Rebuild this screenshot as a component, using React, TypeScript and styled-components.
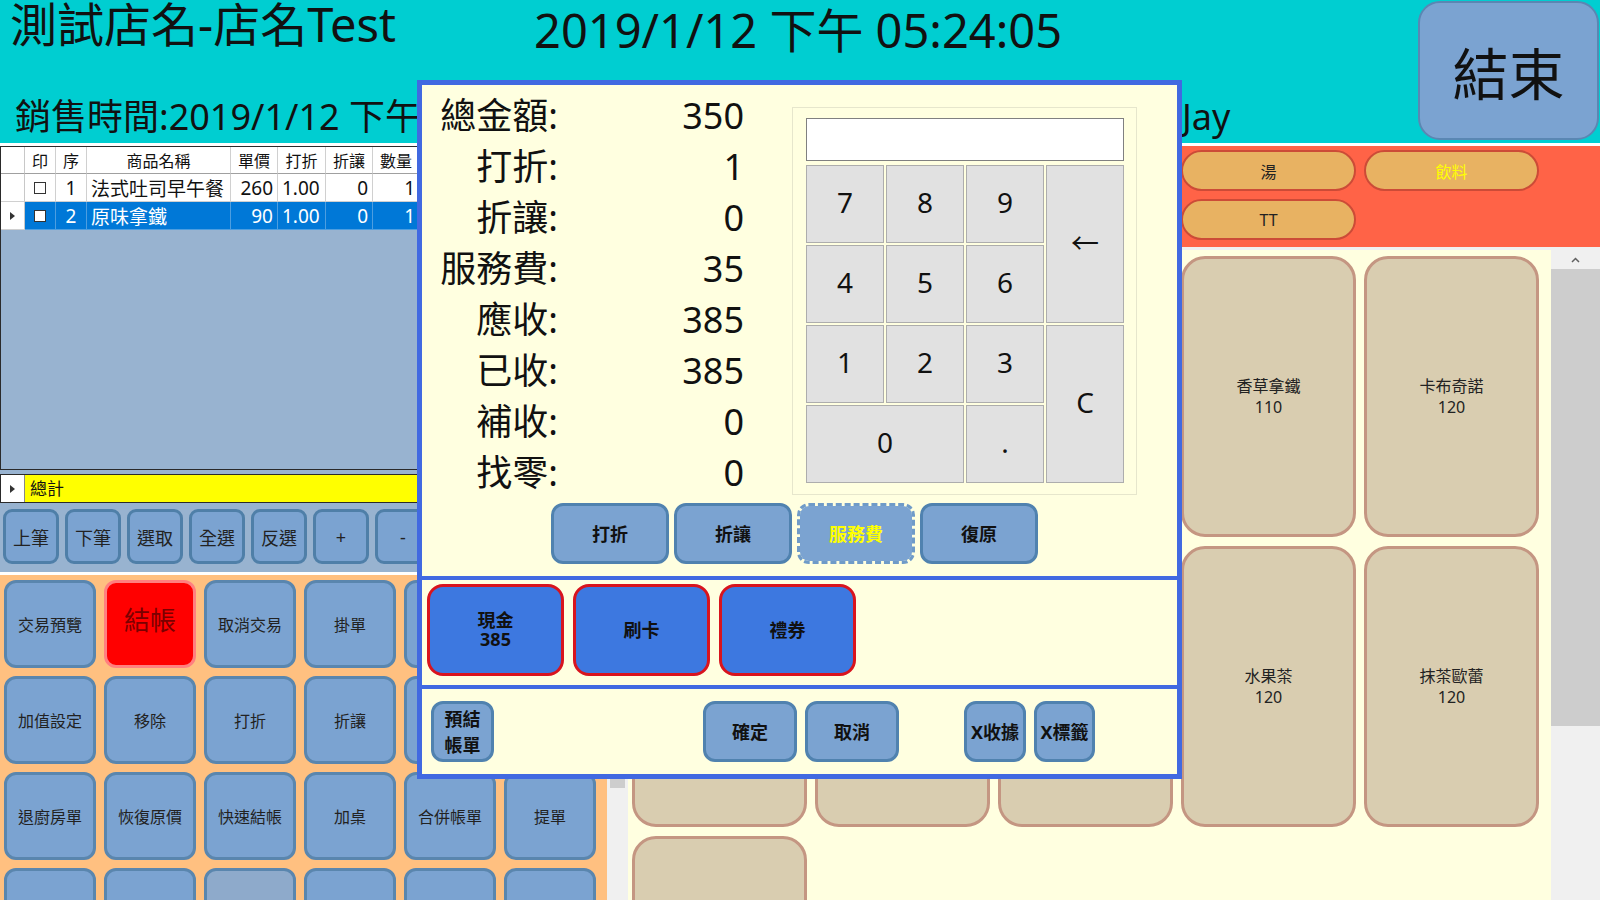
import React from "react";
import styled, { createGlobalStyle } from "styled-components";

const FONT = `"Noto Sans", "Noto Sans CJK TC", sans-serif`;

const GlobalStyle = createGlobalStyle`
  html, body { margin: 0; padding: 0; }
  body { font-family: ${FONT}; background: #ffffff; overflow: hidden; }
  *, *::before, *::after { box-sizing: border-box; }
  button { font-family: ${FONT}; }
`;

const Page = styled.div`
  position: relative;
  width: 1600px;
  height: 900px;
  overflow: hidden;
  background: #ffffff;
  font-family: ${FONT};
  color: #111;
`;

/* ---------------- Header ---------------- */
const Header = styled.header`
  display: grid;
  grid-template-columns: 1fr 182px;
  height: 146px;
  background: #00ced1;
  border-bottom: 3px solid #ffffff;
`;
const HeaderMain = styled.div`
  display: flex;
  flex-direction: column;
`;
const TopRow = styled.div`
  display: flex;
  height: 60px;
`;
const ShopName = styled.div`
  width: 534px;
  padding-left: 10px;
  font-size: 47px;
  line-height: 52px;
  margin-top: -2px;
  white-space: nowrap;
`;
const Clock = styled.div`
  padding-top: 3px;
  font-size: 47px;
  line-height: 54px;
  white-space: nowrap;
`;
const BottomRow = styled.div`
  display: grid;
  grid-template-columns: 1182px 1fr;
  margin-top: 35px;
  height: 44px;
  font-size: 36px;
  line-height: 44px;
  white-space: nowrap;
`;
const SaleTime = styled.div`
  padding-left: 15px;
`;
const Cashier = styled.div``;
const CloseCell = styled.div`
  padding: 1px 1px 3px 0;
`;
const CloseButton = styled.button`
  width: 100%;
  height: 100%;
  background: #7ba3d1;
  border: 2px solid #5a87b3;
  border-radius: 22px;
  font-size: 56px;
  color: #111;
  padding: 0;
`;

/* ---------------- Body ---------------- */
const Body = styled.div`
  display: grid;
  grid-template-columns: 628px 1fr;
  height: 754px;
`;
const LeftPanel = styled.div`
  display: flex;
  flex-direction: column;
  background: #98b3d0;
  min-height: 0;
`;

const gridCols = [
  { title: "印", width: 31, align: "center" },
  { title: "序", width: 31, align: "center" },
  { title: "商品名稱", width: 144, align: "left" },
  { title: "單價", width: 47, align: "right" },
  { title: "打折", width: 48, align: "left" },
  { title: "折讓", width: 47, align: "right" },
  { title: "數量", width: 47, align: "right" },
  { title: "小計", width: 60, align: "right" },
  { title: "備註", width: 120, align: "left" },
] as const;

const TEMPLATE = `24px ${gridCols.map((c) => `${c.width}px`).join(" ")}`;

const OrderGrid = styled.div`
  height: 324px;
  border: 1px solid #2a2a2a;
  border-right: none;
  background: #98b3d0;
  overflow: hidden;
`;
const GridRow = styled.div<{ $header?: boolean }>`
  display: grid;
  grid-template-columns: ${TEMPLATE};
  height: ${(p) => (p.$header ? 27 : 28)}px;
`;
const RowHead = styled.div<{ $header?: boolean }>`
  display: flex;
  align-items: center;
  justify-content: center;
  background: #ffffff;
  border-right: 1px solid #c8c8c8;
  border-bottom: 1px solid ${(p) => (p.$header ? "#a0a0a0" : "#d0d0d0")};
`;
const Cell = styled.div<{ $align: string; $selected?: boolean; $header?: boolean }>`
  display: flex;
  align-items: center;
  justify-content: ${(p) =>
    p.$align === "left" ? "flex-start" : p.$align === "right" ? "flex-end" : "center"};
  padding: 0 4px 0 4px;
  overflow: hidden;
  white-space: nowrap;
  font-size: ${(p) => (p.$header ? 16 : 19)}px;
  background: ${(p) => (p.$selected ? "#0078d7" : "#ffffff")};
  color: ${(p) => (p.$selected ? "#ffffff" : "#111")};
  border-right: 1px solid ${(p) => (p.$selected ? "#4d9ee0" : "#d0d0d0")};
  border-bottom: 1px solid ${(p) => (p.$header ? "#a0a0a0" : p.$selected ? "#4d9ee0" : "#d0d0d0")};
`;
const HeaderCell = styled(Cell)`
  justify-content: center;
`;
const CheckBox = styled.span`
  width: 12px;
  height: 12px;
  border: 1px solid #333;
  background: #ffffff;
`;
const RowArrow = styled.span`
  width: 0;
  height: 0;
  border-left: 5px solid #333;
  border-top: 4px solid transparent;
  border-bottom: 4px solid transparent;
`;

const GridGap = styled.div`
  height: 4px;
`;
const TotalGrid = styled.div`
  display: grid;
  grid-template-columns: 24px 1fr;
  height: 29px;
  border-top: 1px solid #2a2a2a;
  border-bottom: 1px solid #2a2a2a;
  border-left: 1px solid #2a2a2a;
`;
const TotalHead = styled.div`
  display: flex;
  align-items: center;
  justify-content: center;
  background: #ffffff;
  border-right: 1px solid #888;
`;
const TotalCell = styled.div`
  background: #ffff00;
  font-size: 17px;
  line-height: 27px;
  padding-left: 5px;
`;

const ActionBar = styled.div`
  display: flex;
  gap: 6px;
  height: 69px;
  padding: 6px 0 0 3px;
  overflow: hidden;
`;
const ActionButton = styled.button`
  flex: 0 0 56px;
  height: 55px;
  background: #7ba3d1;
  border: 3px solid #4f7fa8;
  border-radius: 9px;
  font-size: 18px;
  color: #222;
  padding: 0;
`;

const FunctionArea = styled.div`
  flex: 1;
  display: grid;
  grid-template-columns: 607px 21px;
  border-top: 3px solid #ffffff;
  background: #ffc080;
  min-height: 0;
`;
const FuncGrid = styled.div`
  display: grid;
  grid-template-columns: repeat(6, 92px);
  grid-auto-rows: 88px;
  column-gap: 8px;
  row-gap: 8px;
  padding: 5px 0 0 4px;
  overflow: hidden;
`;
const FuncButton = styled.button<{ $variant?: "pay" | "dim" }>`
  background: ${(p) => (p.$variant === "pay" ? "#ff0000" : p.$variant === "dim" ? "#8eaacb" : "#7ba3d1")};
  border: 3px solid ${(p) => (p.$variant === "pay" ? "#ff8080" : "#5a86ae")};
  border-radius: 12px;
  font-size: ${(p) => (p.$variant === "pay" ? 26 : 16)}px;
  color: ${(p) => (p.$variant === "pay" ? "#7a0000" : "#222")};
  padding: 0;
  ${(p) => (p.$variant === "pay" ? "padding-bottom: 10px;" : "")}
`;

/* scrollbars */
const ScrollTrack = styled.div`
  display: flex;
  flex-direction: column;
  align-items: center;
  background: #f0f0f0;
  height: 100%;
  overflow: hidden;
`;
const ScrollArrow = styled.div<{ $h: number }>`
  flex: 0 0 ${(p) => p.$h}px;
  width: 100%;
  display: flex;
  align-items: center;
  justify-content: center;
`;
const ScrollThumb = styled.div<{ $h: number; $w: string }>`
  flex: 0 0 ${(p) => p.$h}px;
  width: ${(p) => p.$w};
  background: #cdcdcd;
`;
const ScrollSpacer = styled.div`
  flex: 1;
`;
const Chevron = ({ up }: { up?: boolean }) => (
  <svg width="9" height="6" viewBox="0 0 9 6">
    <polyline
      points={up ? "1,5 4.5,1.5 8,5" : "1,1 4.5,4.5 8,1"}
      fill="none"
      stroke="#606060"
      strokeWidth="1.5"
    />
  </svg>
);

/* right panel */
const RightPanel = styled.div`
  display: flex;
  flex-direction: column;
  min-width: 0;
`;
const CategoryBand = styled.div`
  height: 104px;
  flex-shrink: 0;
  background: #ff6347;
  border-bottom: 3px solid #f0f0f0;
  display: grid;
  grid-template-columns: repeat(5, 175px);
  grid-auto-rows: 41px;
  column-gap: 8px;
  row-gap: 8px;
  padding: 4px 0 0 4px;
`;
const CategoryPill = styled.button<{ $active?: boolean }>`
  background: #e8b262;
  border: 2px solid #cc4b37;
  border-radius: 21px;
  font-size: 16px;
  color: ${(p) => (p.$active ? "#ffff00" : "#222")};
  padding: 0;
`;
const ProductArea = styled.div`
  flex: 1;
  display: grid;
  grid-template-columns: 1fr 49px;
  min-height: 0;
`;
const ProductGrid = styled.div`
  background: #ffffe0;
  display: grid;
  grid-template-columns: repeat(5, 175px);
  grid-auto-rows: 281px;
  column-gap: 8px;
  row-gap: 9px;
  padding: 6px 0 0 4px;
  overflow: hidden;
`;
const ProductTile = styled.button`
  background: #d9cdb0;
  border: 3px solid #c49682;
  border-radius: 24px;
  font-size: 16px;
  line-height: 21px;
  color: #222;
  padding: 0;
  white-space: pre-line;
`;

/* ---------------- Dialog ---------------- */
const Dialog = styled.div`
  position: absolute;
  left: 417px;
  top: 80px;
  width: 765px;
  height: 699px;
  border: 5px solid #4169e1;
  background: #ffffe0;
  display: flex;
  flex-direction: column;
  z-index: 10;
`;
const MainSection = styled.div`
  height: 491px;
  display: flex;
  flex-direction: column;
`;
const UpperArea = styled.div`
  display: flex;
  align-items: flex-start;
  height: 418px;
`;
const Summary = styled.div`
  display: grid;
  grid-template-columns: 136px 186px;
  grid-auto-rows: 51px;
  padding-top: 5px;
  font-size: 36px;
  line-height: 51px;
  white-space: nowrap;
`;
const SumLabel = styled.div`
  text-align: right;
`;
const SumValue = styled.div`
  text-align: right;
`;
const Numpad = styled.div`
  margin: 22px 0 0 48px;
  width: 345px;
  height: 388px;
  border: 1px solid #e6e6cc;
  padding: 10px 12px 0 13px;
`;
const NumInput = styled.div`
  width: 318px;
  height: 43px;
  background: #ffffff;
  border: 1px solid #808080;
`;
const KeyGrid = styled.div`
  display: grid;
  grid-template-columns: repeat(4, 78px);
  grid-template-rows: repeat(4, 78px);
  gap: 2px;
  margin-top: 4px;
`;
const Key = styled.button<{ $col?: string; $row?: string }>`
  grid-column: ${(p) => p.$col || "auto"};
  grid-row: ${(p) => p.$row || "auto"};
  background: #e1e1e1;
  border: 1px solid #adadad;
  font-size: 28px;
  color: #111;
  padding: 0 0 4px 0;
`;
const DialogButtonRow = styled.div`
  display: flex;
  gap: 5px;
  padding-left: 129px;
`;
const DlgButton = styled.button<{ $w: number; $gap?: number; $focused?: boolean }>`
  flex: 0 0 ${(p) => p.$w}px;
  height: 61px;
  margin-left: ${(p) => p.$gap || 0}px;
  background: #7ba3d1;
  border: 3px ${(p) => (p.$focused ? "dashed #6f9bc8" : "solid #5082af")};
  background-clip: ${(p) => (p.$focused ? "padding-box" : "border-box")};
  border-radius: 12px;
  font-size: 18px;
  font-weight: 700;
  line-height: 26px;
  color: ${(p) => (p.$focused ? "#ffff00" : "#111")};
  padding: 0;
  white-space: pre-line;
`;
const PaySection = styled.div`
  height: 109px;
  border-top: 4px solid #4169e1;
  display: flex;
  gap: 9px;
  padding: 4px 0 0 5px;
`;
const PayButton = styled.button`
  flex: 0 0 137px;
  height: 92px;
  background: #3d78e0;
  border: 3px solid #d8141e;
  border-radius: 16px;
  font-size: 18px;
  font-weight: 700;
  line-height: 19px;
  color: #111;
  padding: 0;
  white-space: pre-line;
`;
const FooterSection = styled.div`
  flex: 1;
  border-top: 4px solid #4169e1;
  display: flex;
  padding: 12px 0 0 9px;
`;

/* ---------------- Data ---------------- */
const orderRows = [
  { no: "1", name: "法式吐司早午餐", price: "260", disc: "1.00", off: "0", qty: "1", sub: "260", note: "" },
  { no: "2", name: "原味拿鐵", price: "90", disc: "1.00", off: "0", qty: "1", sub: "90", note: "" },
];
const actions = ["上筆", "下筆", "選取", "全選", "反選", "+", "-", "刪除", "修改"];
const functions: { label: string; variant?: "pay" | "dim" }[] = [
  { label: "交易預覽" }, { label: "結帳", variant: "pay" }, { label: "取消交易" }, { label: "掛單" }, { label: "叫單" }, { label: "開錢櫃" },
  { label: "加值設定" }, { label: "移除" }, { label: "打折" }, { label: "折讓" }, { label: "服務費" }, { label: "註記" },
  { label: "退廚房單" }, { label: "恢復原價" }, { label: "快速結帳" }, { label: "加桌" }, { label: "合併帳單" }, { label: "提單" },
  { label: "" }, { label: "" }, { label: "", variant: "dim" }, { label: "" }, { label: "" }, { label: "" },
];
const categories = [
  { label: "主餐" }, { label: "早午餐" }, { label: "甜點" }, { label: "湯" }, { label: "飲料", active: true },
  { label: "沙拉" }, { label: "套餐" }, { label: "小點" }, { label: "TT" },
];
const products = [
  "原味拿鐵\n90", "美式咖啡\n80", "焦糖瑪奇朵\n120", "香草拿鐵\n110", "卡布奇諾\n120",
  "摩卡\n120", "紅茶拿鐵\n100", "檸檬紅茶\n80", "水果茶\n120", "抹茶歐蕾\n120",
  "熱可可\n100",
];
const summary = [
  ["總金額:", "350"], ["打折:", "1"], ["折讓:", "0"], ["服務費:", "35"],
  ["應收:", "385"], ["已收:", "385"], ["補收:", "0"], ["找零:", "0"],
];

export default function App() {
  return (
    <Page>
      <GlobalStyle />
      <Header>
        <HeaderMain>
          <TopRow>
            <ShopName>測試店名-店名Test</ShopName>
            <Clock>2019/1/12 下午 05:24:05</Clock>
          </TopRow>
          <BottomRow>
            <SaleTime>銷售時間:2019/1/12 下午 05:20:11</SaleTime>
            <Cashier>Jay</Cashier>
          </BottomRow>
        </HeaderMain>
        <CloseCell>
          <CloseButton>結束</CloseButton>
        </CloseCell>
      </Header>

      <Body>
        <LeftPanel>
          <OrderGrid>
            <GridRow $header>
              <RowHead $header />
              {gridCols.map((c) => (
                <HeaderCell key={c.title} $align="center" $header>
                  {c.title}
                </HeaderCell>
              ))}
            </GridRow>
            {orderRows.map((r, i) => {
              const sel = i === 1;
              const vals = [null, r.no, r.name, r.price, r.disc, r.off, r.qty, r.sub, r.note];
              return (
                <GridRow key={r.no}>
                  <RowHead>{sel && <RowArrow />}</RowHead>
                  {gridCols.map((c, ci) => (
                    <Cell key={c.title} $align={c.align} $selected={sel}>
                      {ci === 0 ? <CheckBox /> : vals[ci]}
                    </Cell>
                  ))}
                </GridRow>
              );
            })}
          </OrderGrid>
          <GridGap />
          <TotalGrid>
            <TotalHead>
              <RowArrow />
            </TotalHead>
            <TotalCell>總計</TotalCell>
          </TotalGrid>
          <ActionBar>
            {actions.map((a) => (
              <ActionButton key={a}>{a}</ActionButton>
            ))}
          </ActionBar>
          <FunctionArea>
            <FuncGrid>
              {functions.map((f, i) => (
                <FuncButton key={i} $variant={f.variant}>
                  {f.label}
                </FuncButton>
              ))}
            </FuncGrid>
            <ScrollTrack>
              <ScrollArrow $h={17}>
                <Chevron up />
              </ScrollArrow>
              <ScrollThumb $h={196} $w="15px" />
              <ScrollSpacer />
              <ScrollArrow $h={17}>
                <Chevron />
              </ScrollArrow>
            </ScrollTrack>
          </FunctionArea>
        </LeftPanel>

        <RightPanel>
          <CategoryBand>
            {categories.map((c) => (
              <CategoryPill key={c.label} $active={c.active}>
                {c.label}
              </CategoryPill>
            ))}
          </CategoryBand>
          <ProductArea>
            <ProductGrid>
              {products.map((p, i) => (
                <ProductTile key={i}>{p}</ProductTile>
              ))}
            </ProductGrid>
            <ScrollTrack>
              <ScrollArrow $h={19}>
                <Chevron up />
              </ScrollArrow>
              <ScrollThumb $h={457} $w="100%" />
              <ScrollSpacer />
              <ScrollArrow $h={17}>
                <Chevron />
              </ScrollArrow>
            </ScrollTrack>
          </ProductArea>
        </RightPanel>
      </Body>

      <Dialog>
        <MainSection>
          <UpperArea>
            <Summary>
              {summary.map(([l, v]) => (
                <React.Fragment key={l}>
                  <SumLabel>{l}</SumLabel>
                  <SumValue>{v}</SumValue>
                </React.Fragment>
              ))}
            </Summary>
            <Numpad>
              <NumInput />
              <KeyGrid>
                <Key>7</Key>
                <Key>8</Key>
                <Key>9</Key>
                <Key $row="span 2">←</Key>
                <Key>4</Key>
                <Key>5</Key>
                <Key>6</Key>
                <Key>1</Key>
                <Key>2</Key>
                <Key>3</Key>
                <Key $row="span 2">C</Key>
                <Key $col="span 2">0</Key>
                <Key>.</Key>
              </KeyGrid>
            </Numpad>
          </UpperArea>
          <DialogButtonRow>
            <DlgButton $w={118}>打折</DlgButton>
            <DlgButton $w={118}>折讓</DlgButton>
            <DlgButton $w={118} $focused>服務費</DlgButton>
            <DlgButton $w={118}>復原</DlgButton>
          </DialogButtonRow>
        </MainSection>
        <PaySection>
          <PayButton>{"現金\n385"}</PayButton>
          <PayButton>刷卡</PayButton>
          <PayButton>禮券</PayButton>
        </PaySection>
        <FooterSection>
          <DlgButton $w={63}>{"預結\n帳單"}</DlgButton>
          <DlgButton $w={94} $gap={209}>確定</DlgButton>
          <DlgButton $w={94} $gap={8}>取消</DlgButton>
          <DlgButton $w={62} $gap={65}>X收據</DlgButton>
          <DlgButton $w={61} $gap={8}>X標籤</DlgButton>
        </FooterSection>
      </Dialog>
    </Page>
  );
}
